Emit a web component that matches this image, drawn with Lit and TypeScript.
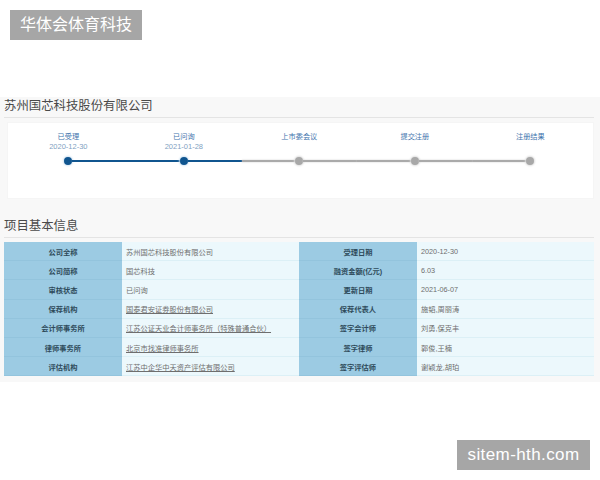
import { LitElement, html, css } from 'lit';
import { customElement } from 'lit/decorators.js';

const FONT = css`'Liberation Sans', 'Noto Sans CJK SC', sans-serif`;

const STEPS = [
  { name: '已受理', date: '2020-12-30', left: '', right: 'blue', on: true },
  { name: '已问询', date: '2021-01-28', left: 'blue', right: 'blue', on: true },
  { name: '上市委会议', date: '', left: 'gray', right: 'gray', on: false },
  { name: '提交注册', date: '', left: 'gray', right: 'gray', on: false },
  { name: '注册结果', date: '', left: 'gray', right: '', on: false },
];

const ROWS = [
  ['公司全称', '苏州国芯科技股份有限公司', false, '受理日期', '2020-12-30'],
  ['公司简称', '国芯科技', false, '融资金额(亿元)', '6.03'],
  ['审核状态', '已问询', false, '更新日期', '2021-06-07'],
  ['保荐机构', '国泰君安证券股份有限公司', true, '保荐代表人', '施韬,周丽涛'],
  ['会计师事务所', '江苏公证天业会计师事务所（特殊普通合伙）', true, '签字会计师', '刘勇,保克丰'],
  ['律师事务所', '北京市找准律师事务所', true, '签字律师', '郭俊,王楠'],
  ['评估机构', '江苏中企华中天资产评估有限公司', true, '签字评估师', '谢颖龙,胡珀'],
] as const;

@customElement('app-root')
export class AppRoot extends LitElement {
  static override styles = css`
    :host {
      display: block;
      position: relative;
      width: 600px;
      height: 480px;
      overflow: hidden;
      background: #fff;
      font-family: ${FONT};
    }

    .panel {
      margin-top: 97px;
      height: 285px;
      padding: 0 6px 0 4px;
      box-sizing: border-box;
      background: #f8f8f8;
      display: flex;
      flex-direction: column;
    }

    .title {
      height: 20px;
      line-height: 18px;
      font-size: 12.4px;
      color: #4a4a4a;
      border-bottom: 1px solid #e4e4e4;
    }

    .card {
      margin: 4px 0 0 3px;
      height: 77px;
      box-sizing: border-box;
      padding: 9px 0 0 2.6px;
      background: #fff;
      border: 1px solid #f5f5f5;
      display: flex;
    }

    .step {
      width: 115.5px;
      display: flex;
      flex-direction: column;
      align-items: center;
      color: #3f74ad;
    }

    .name {
      height: 10px;
      line-height: 10px;
      font-size: 7.2px;
    }

    .date {
      height: 10px;
      line-height: 10px;
      font-size: 7.5px;
      color: #7f9fc2;
    }

    .track {
      margin-top: 4px;
      width: 100%;
      height: 9px;
      display: flex;
      align-items: center;
    }

    .seg {
      flex: 1;
      height: 2px;
    }

    .seg.blue {
      background: #10558f;
    }

    .seg.gray {
      background: #aaa;
      box-shadow: 0 0 2px #ccc;
    }

    .node {
      flex: none;
      width: 8px;
      height: 8px;
      border-radius: 50%;
      background: #a8a8a8;
      box-shadow: 0 0 2px 1px #ddd;
    }

    .node.on {
      background: #10558f;
      box-shadow: 0 0 2px 1px #cfe2f2;
    }

    .second {
      margin-top: 18px;
    }

    .grid {
      margin-top: 4px;
      display: grid;
      grid-template-columns: 118px 177px 118px 177px;
      grid-auto-rows: 19.2px;
      font-size: 7.25px;
    }

    .label,
    .value {
      display: flex;
      align-items: center;
      box-sizing: border-box;
      padding-top: 1px;
      border-bottom: 1px solid #b8dbe8;
    }

    .label {
      justify-content: center;
      background: #9ccbe3;
      color: #2e4a5a;
      font-weight: bold;
      border-bottom-color: #93c4dd;
    }

    .value {
      padding-left: 4px;
      background: #ecf8fc;
      color: #6e6e6e;
      border-bottom-color: #dcf0f6;
    }

    .value.link span {
      text-decoration: underline;
    }

    .mark {
      position: absolute;
      height: 30px;
      line-height: 30px;
      background: #a6a6a6;
      color: #fff;
      text-align: center;
    }

    .mark.top {
      left: 10px;
      top: 10px;
      width: 132px;
      font-size: 16px;
    }

    .mark.bottom {
      left: 457px;
      top: 440px;
      width: 133px;
      font-size: 17px;
      letter-spacing: 0.4px;
    }
  `;

  override render() {
    return html`
      <div class="panel">
        <div class="title">苏州国芯科技股份有限公司</div>
        <div class="card">
          ${STEPS.map(
            (s) => html`
              <div class="step">
                <div class="name">${s.name}</div>
                <div class="date">${s.date}</div>
                <div class="track">
                  <div class="seg ${s.left}"></div>
                  <div class="node ${s.on ? 'on' : ''}"></div>
                  <div class="seg ${s.right}"></div>
                </div>
              </div>
            `,
          )}
        </div>
        <div class="title second">项目基本信息</div>
        <div class="grid">
          ${ROWS.map(
            ([k1, v1, link, k2, v2]) => html`
              <div class="label">${k1}</div>
              <div class="value ${link ? 'link' : ''}"><span>${v1}</span></div>
              <div class="label">${k2}</div>
              <div class="value"><span>${v2}</span></div>
            `,
          )}
        </div>
      </div>
      <div class="mark top">华体会体育科技</div>
      <div class="mark bottom">sitem-hth.com</div>
    `;
  }
}
